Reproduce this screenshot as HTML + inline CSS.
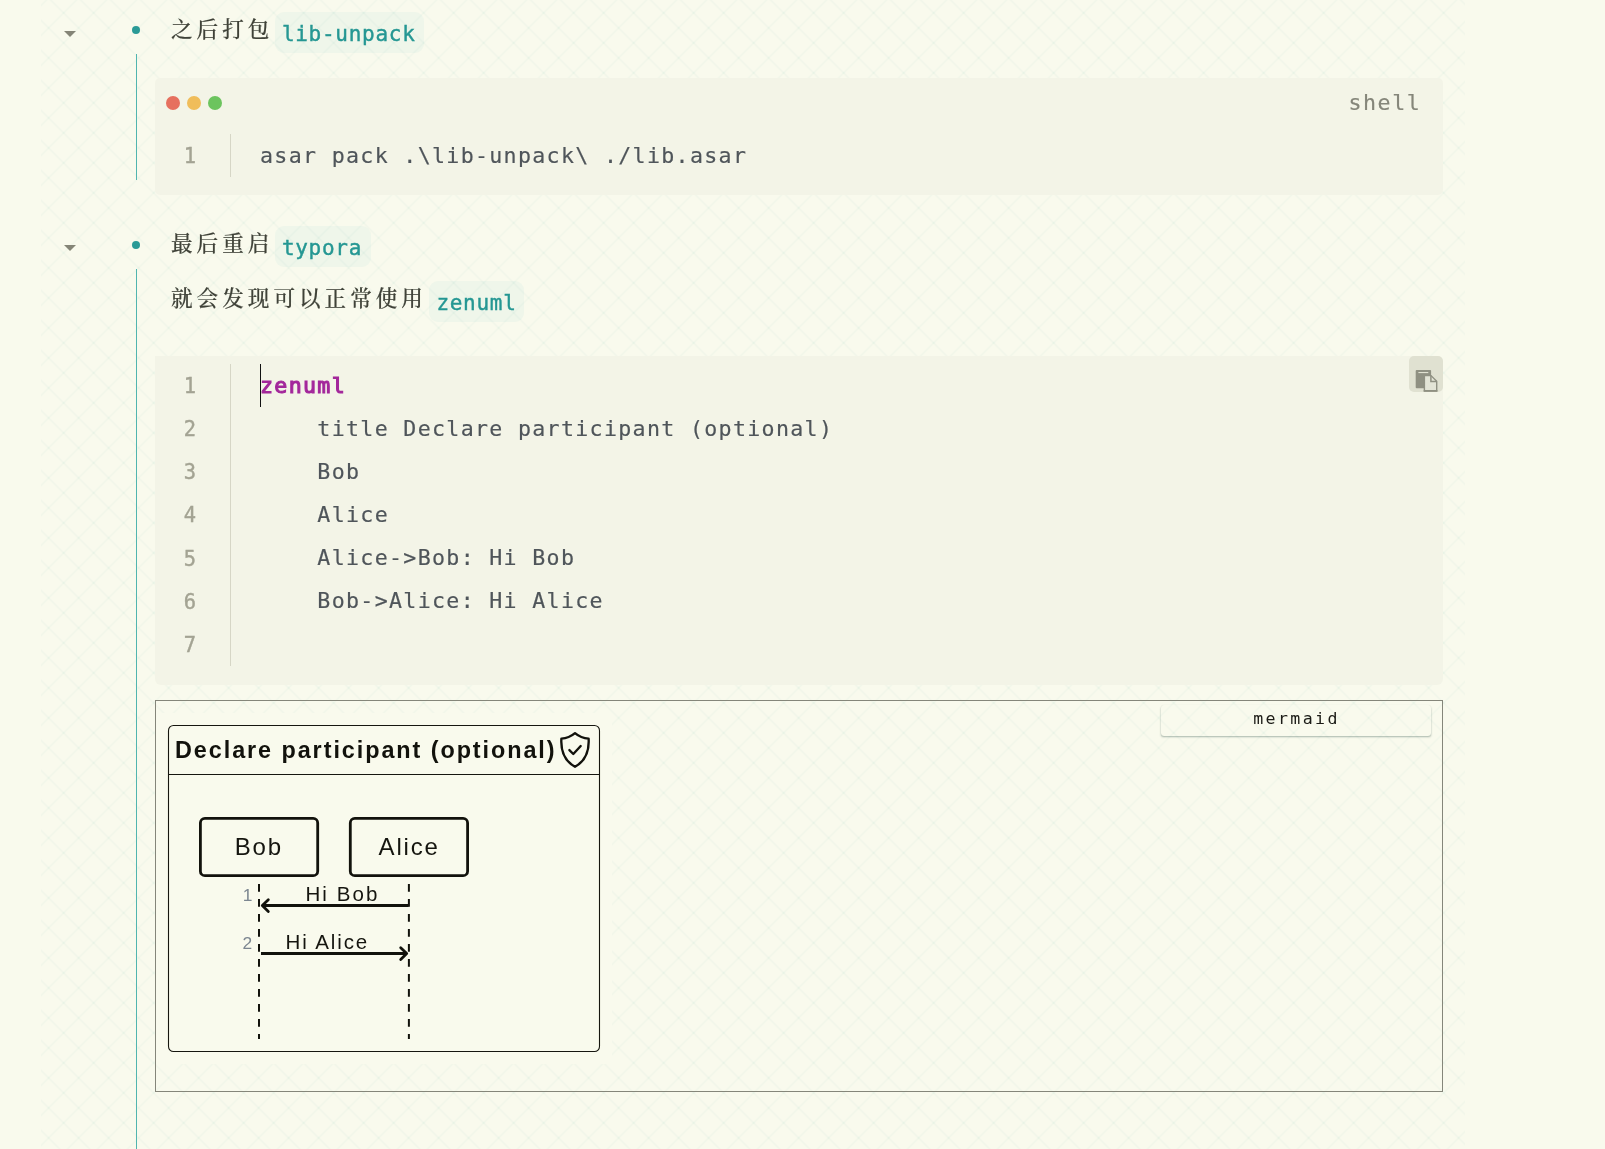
<!DOCTYPE html>
<html lang="zh-CN">
<head>
<meta charset="utf-8">
<title>typora zenuml</title>
<style>
*{box-sizing:border-box;margin:0;padding:0}
html,body{width:1605px;height:1149px;overflow:hidden;background:#f9faed}
body{position:relative;will-change:transform;font-family:"Liberation Sans","Noto Sans CJK SC",sans-serif;color:#3f4238}
.abs{position:absolute}
#write{position:absolute;left:41px;top:0;width:1424px;height:1149px;overflow:hidden}
#write svg.pat{position:absolute;left:0;top:0}
.fold{position:absolute;width:0;height:0;border-left:6.1px solid transparent;border-right:6.1px solid transparent;border-top:6.6px solid #858577}
.bullet{position:absolute;width:8.4px;height:8.4px;border-radius:50%;background:#2a9a96}
.vline{position:absolute;width:1px;background:#50b5af}
.cn{position:absolute;font-family:"Liberation Serif","Noto Serif CJK SC",serif;font-size:21.6px;letter-spacing:4px;line-height:30px;white-space:nowrap;color:#3f4238;font-weight:500;-webkit-text-stroke:.18px #3f4238}
.pill{position:absolute;height:40.8px;border-radius:9px;background:rgba(110,200,200,.072)}
.pill span{position:absolute;left:7px;top:1.7px;line-height:40.6px;font-family:"DejaVu Sans Mono","Liberation Mono",monospace;font-size:21px;letter-spacing:.72px;color:#259793;-webkit-text-stroke:.42px #259793;white-space:nowrap}
.code{position:absolute;left:155px;width:1288px;background:#f3f4e7}
.mono{font-family:"DejaVu Sans Mono","Liberation Mono",monospace;font-size:21.6px;letter-spacing:1.33px;line-height:43.1px;white-space:pre;color:#4f555a;-webkit-text-stroke:.18px}
.ln{position:absolute;left:28.8px;color:#a3a393;font-size:20.4px;-webkit-text-stroke:.4px #a3a393;margin-top:1.2px}
.gut{position:absolute;left:75px;width:1px;background:#d6d6c6}
.ct{position:absolute;left:105px}
.dot{position:absolute;width:14px;height:14px;border-radius:50%;top:18px}
</style>
</head>
<body>
<div id="write">
<svg class="pat" width="1424" height="1149">
<defs><pattern id="dm" width="30" height="30" patternUnits="userSpaceOnUse" x="22.6" y="12.9">
<path d="M-1 -1L31 31M31 -1L-1 31" stroke="#bcdfd0" stroke-opacity=".15" stroke-width="1.35" fill="none"/>
<path d="M14 14h2v2h-2zM-1 -1h2v2h-2zM29 -1h2v2h-2zM-1 29h2v2h-2zM29 29h2v2h-2z" fill="#bcdfd0" fill-opacity=".13"/>
</pattern></defs>
<rect width="1424" height="1149" fill="url(#dm)"/>
</svg>
</div>

<!-- list item 1 -->
<div class="fold" style="left:63.9px;top:30.8px"></div>
<div class="bullet" style="left:131.8px;top:26px"></div>
<div class="vline" style="left:136px;top:54px;height:126px"></div>
<div class="cn" style="left:171px;top:15.4px">之后打包</div>
<div class="pill" style="left:274.9px;top:12.1px;width:149.5px"><span>lib-unpack</span></div>

<!-- code block 1 -->
<div class="code" style="top:78px;height:117px;border-radius:5px">
  <div class="dot" style="left:11px;background:#e6705f"></div>
  <div class="dot" style="left:32.2px;background:#f0bd5a"></div>
  <div class="dot" style="left:53.4px;background:#6cc45e"></div>
  <div class="mono abs" style="right:21.6px;top:2.6px;color:#85867a;letter-spacing:1.6px">shell</div>
  <div class="gut" style="top:56px;height:43px"></div>
  <div class="mono ln" style="top:56px">1</div>
  <div class="mono ct" style="top:56px">asar pack .\lib-unpack\ ./lib.asar</div>
</div>

<!-- list item 2 -->
<div class="fold" style="left:63.9px;top:245.1px"></div>
<div class="bullet" style="left:131.8px;top:240.5px"></div>
<div class="vline" style="left:136px;top:269px;height:880px"></div>
<div class="cn" style="left:171px;top:229.4px">最后重启</div>
<div class="pill" style="left:274.9px;top:226.1px;width:96px"><span>typora</span></div>
<div class="cn" style="left:171px;top:284px">就会发现可以正常使用</div>
<div class="pill" style="left:429.4px;top:281px;width:94.5px"><span>zenuml</span></div>

<!-- code block 2 -->
<div class="code" style="top:356px;height:329px;border-radius:0 6px 6px 6px">
  <div class="gut" style="top:8px;height:302px"></div>
  <div class="mono ln" style="top:8px">1
2
3
4
5
6
7</div>
  <div class="abs" style="left:105px;top:8px;width:1px;height:43px;background:#111"></div>
  <div class="mono ct" style="top:8px"><span style="color:#a3279b;-webkit-text-stroke:1.1px #a3279b">zenuml</span>
    title Declare participant (optional)
    Bob
    Alice
    Alice-&gt;Bob: Hi Bob
    Bob-&gt;Alice: Hi Alice
</div>
  <div class="abs" style="right:0;top:0;width:34px;height:36px;border-radius:5px;background:#e0e1d1">
    <svg class="abs" style="left:6px;top:14px" width="24" height="22" viewBox="0 0 24 22"><rect x="0.7" y="0" width="15.4" height="18.3" rx="1" fill="#8f9082"/><rect x="3.4" y="2" width="9.9" height="1.1" fill="#e0e1d1"/><path d="M9.4 5.6H16L21.7 11.3V20.8H9.4z" fill="#e3e4d6" stroke="#8f9082" stroke-width="1.4"/><path d="M15.9 5.8v5.7h5.7" fill="none" stroke="#8f9082" stroke-width="1.5"/><rect x="8.7" y="20" width="13.7" height="1.8" fill="#8f9082"/></svg>
  </div>
</div>

<!-- mermaid / zenuml diagram -->
<div class="abs" style="left:155px;top:700px;width:1288px;height:392px;border:1px solid #85867a"></div>
<div class="abs" style="left:1161px;top:705px;width:270px;height:30.5px;border-radius:3px;box-shadow:0 1.5px 2px -.5px rgba(60,90,80,.42), 0 0 1px rgba(60,90,80,.14);text-align:center;font-family:'DejaVu Sans Mono','Liberation Mono',monospace;font-size:16.6px;letter-spacing:2.4px;line-height:27px;color:#1b1b16;padding-left:1px">mermaid</div>

<div class="abs" style="left:156px;top:713px;width:456.4px;height:350.5px;background:#f9faed"></div>
<svg class="abs" style="left:150px;top:705px" width="480" height="370" viewBox="150 705 480 370" font-family="'Liberation Sans',Arial,sans-serif">
  <rect x="168.5" y="725.5" width="431" height="326" rx="5" fill="none" stroke="#16160f" stroke-width="1.1"/>
  <line x1="168.5" y1="774.5" x2="599.5" y2="774.5" stroke="#16160f" stroke-width="1.1"/>
  <text x="175" y="758" font-size="23.4" font-weight="700" letter-spacing="1.93" fill="#12120c">Declare participant (optional)</text>
  <g fill="none" stroke="#12120c" stroke-width="2.35" stroke-linejoin="round" stroke-linecap="round">
    <path d="M575 733.2C571 736.6 566.5 738.4 561.4 738.7C560.8 748 562 759.5 575 766.8C588 759.5 589.2 748 588.6 738.7C583.5 738.4 579 736.6 575 733.2Z"/>
    <path d="M569.4 750.1L573.3 754L580.7 746"/>
  </g>
  <rect x="200.4" y="818.4" width="117.3" height="57.3" rx="4.5" fill="none" stroke="#12120c" stroke-width="2.8"/>
  <rect x="350.3" y="818.4" width="117.3" height="57.3" rx="4.5" fill="none" stroke="#12120c" stroke-width="2.8"/>
  <text x="234.8" y="855" font-size="24" letter-spacing="1.75" fill="#15150f">Bob</text>
  <text x="378.6" y="855" font-size="24" letter-spacing="1.8" fill="#15150f">Alice</text>
  <line x1="259" y1="883.9" x2="259" y2="1038.9" stroke="#12120c" stroke-width="2" stroke-dasharray="7.8 7.2"/>
  <line x1="408.9" y1="883.9" x2="408.9" y2="1038.9" stroke="#12120c" stroke-width="2" stroke-dasharray="7.8 7.2"/>
  <g stroke="#12120c" stroke-width="2.8" fill="none" stroke-linecap="round" stroke-linejoin="round">
    <path d="M263 905.5H408.5" stroke-linecap="butt"/>
    <path d="M268.3 899.8L262.3 905.5L268.3 911.4"/>
    <path d="M261 953.5H406" stroke-linecap="butt"/>
    <path d="M400.7 947.8L406.7 953.5L400.7 959.4"/>
  </g>
  <text x="305.5" y="900.9" font-size="20.5" letter-spacing="2.05" fill="#15150f">Hi Bob</text>
  <text x="285.6" y="948.8" font-size="20.5" letter-spacing="1.9" fill="#15150f">Hi Alice</text>
  <text x="242.8" y="900.7" font-size="17.4" fill="#7c8690">1</text>
  <text x="242.6" y="948.9" font-size="17.4" fill="#7c8690">2</text>
</svg>
</body>
</html>
